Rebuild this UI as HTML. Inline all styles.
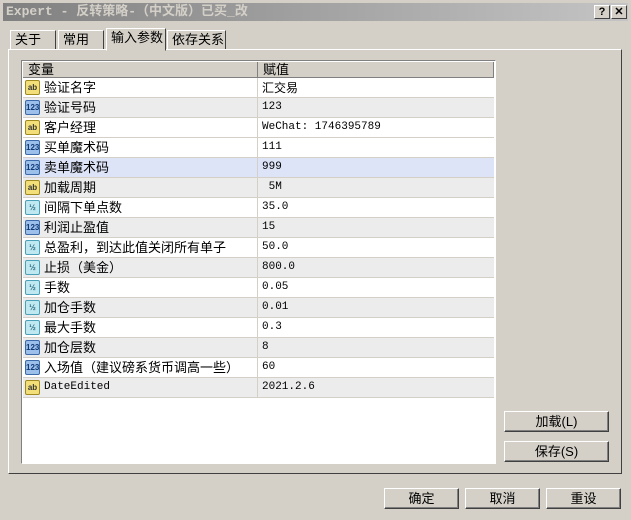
<!DOCTYPE html>
<html><head><meta charset="utf-8"><style>
*{margin:0;padding:0;box-sizing:border-box}
body{width:631px;height:520px;background:#d4d0c8;font-family:"Liberation Sans","Noto Sans CJK SC",sans-serif;font-size:12px;position:relative;overflow:hidden;color:#000}
.title{position:absolute;left:3px;top:3px;width:625px;height:18px;background:linear-gradient(90deg,#808080,#c4c4c4);color:#d4d0c8;font-weight:bold;font-family:"Liberation Mono","Noto Sans CJK SC",monospace;font-size:13px;line-height:18px;padding-left:3px}
.tb{position:absolute;top:5px;width:16px;height:14px;background:#d4d0c8;border:1px solid;border-color:#fff #404040 #404040 #fff;font-size:11px;font-weight:bold;text-align:center;line-height:12px}
.tab{position:absolute;height:20px;border:1px solid;border-color:#fff #404040 transparent #fff;line-height:18px;padding-left:4px;font-size:13px}
.panel{position:absolute;left:8px;top:49px;width:614px;height:425px;border:1px solid;border-color:#fff #404040 #404040 #fff}
.grid{position:absolute;left:21px;top:60px;width:475px;height:404px;background:#fff;border:1px solid;border-color:#808080 #fff #fff #808080}
.hdr{position:absolute;left:1px;top:1px;height:16px;width:471px;background:#d4d0c8;border-bottom:1px solid #808080;font-size:13px}
.hdr span{position:absolute;top:0;line-height:15px;border-right:1px solid #808080;height:16px;padding-left:5px}
.row{position:absolute;left:1px;width:471px;height:20px;border-bottom:1px solid #d4d0c8;line-height:19px}
.row .n{position:absolute;left:21px;font-size:13px}
.row .v{position:absolute;left:237px;font-family:"Liberation Mono","Noto Sans CJK SC",monospace;font-size:11px;padding-left:2px}
.row .sep{position:absolute;left:234px;top:0;height:20px;border-left:1px solid #d4d0c8}
.ic{position:absolute;left:2px;top:2px;width:15px;height:15px;border:1px solid;border-radius:2px;font-size:8px;font-weight:bold;line-height:13px;text-align:center;font-family:"Liberation Sans",sans-serif}
.ab{background:#f2df7a;border-color:#a08a20;color:#333}
.n123{background:#9cc0ea;border-color:#3a6aa8;color:#123c78}
.half{background:#bfe8f0;border-color:#4aa0b8;color:#2a6a80}
.btn{position:absolute;height:21px;background:#d4d0c8;border:1px solid;border-color:#fff #404040 #404040 #fff;box-shadow:inset -1px -1px 0 #808080;text-align:center;line-height:19px;font-size:13px}
</style></head><body>
<div class="title">Expert - 反转策略-（中文版）已买_改</div>
<div class="tb" style="left:594px">?</div>
<div class="tb" style="left:611px">✕</div>
<div class="tab" style="left:10px;top:30px;width:46px">关于</div>
<div class="tab" style="left:58px;top:30px;width:46px">常用</div>
<div class="tab" style="left:106px;top:28px;width:60px;height:23px;background:#d4d0c8;z-index:2">输入参数</div>
<div class="tab" style="left:167px;top:30px;width:59px">依存关系</div>
<div class="panel"></div>
<div class="grid">
<div class="hdr"><span style="left:0;width:235px">变量</span><span style="left:235px;width:236px">赋值</span></div>
<div class="row" style="top:17px"><div class="ic ab">ab</div><span class="n">验证名字</span><span class="sep"></span><span class="v" style="font-family:'Noto Sans CJK SC';font-size:12px">汇交易</span></div>
<div class="row" style="top:37px;background:#ececec"><div class="ic n123">123</div><span class="n">验证号码</span><span class="sep"></span><span class="v">123</span></div>
<div class="row" style="top:57px"><div class="ic ab">ab</div><span class="n">客户经理</span><span class="sep"></span><span class="v">WeChat: 1746395789</span></div>
<div class="row" style="top:77px"><div class="ic n123">123</div><span class="n">买单魔术码</span><span class="sep"></span><span class="v">111</span></div>
<div class="row" style="top:97px;background:#dde4f8"><div class="ic n123">123</div><span class="n">卖单魔术码</span><span class="sep"></span><span class="v">999</span></div>
<div class="row" style="top:117px;background:#ececec"><div class="ic ab">ab</div><span class="n">加载周期</span><span class="sep"></span><span class="v">&nbsp;5M</span></div>
<div class="row" style="top:137px"><div class="ic half">½</div><span class="n">间隔下单点数</span><span class="sep"></span><span class="v">35.0</span></div>
<div class="row" style="top:157px;background:#ececec"><div class="ic n123">123</div><span class="n">利润止盈值</span><span class="sep"></span><span class="v">15</span></div>
<div class="row" style="top:177px"><div class="ic half">½</div><span class="n">总盈利，到达此值关闭所有单子</span><span class="sep"></span><span class="v">50.0</span></div>
<div class="row" style="top:197px;background:#ececec"><div class="ic half">½</div><span class="n">止损（美金）</span><span class="sep"></span><span class="v">800.0</span></div>
<div class="row" style="top:217px"><div class="ic half">½</div><span class="n">手数</span><span class="sep"></span><span class="v">0.05</span></div>
<div class="row" style="top:237px;background:#ececec"><div class="ic half">½</div><span class="n">加仓手数</span><span class="sep"></span><span class="v">0.01</span></div>
<div class="row" style="top:257px"><div class="ic half">½</div><span class="n">最大手数</span><span class="sep"></span><span class="v">0.3</span></div>
<div class="row" style="top:277px;background:#ececec"><div class="ic n123">123</div><span class="n">加仓层数</span><span class="sep"></span><span class="v">8</span></div>
<div class="row" style="top:297px"><div class="ic n123">123</div><span class="n">入场值（建议磅系货币调高一些）</span><span class="sep"></span><span class="v">60</span></div>
<div class="row" style="top:317px;background:#ececec"><div class="ic ab">ab</div><span class="n" style="font-family:'Liberation Mono',monospace;font-size:11px">DateEdited</span><span class="sep"></span><span class="v">2021.2.6</span></div>
</div>
<div class="btn" style="left:504px;top:411px;width:105px">加载(L)</div>
<div class="btn" style="left:504px;top:441px;width:105px">保存(S)</div>
<div class="btn" style="left:384px;top:488px;width:75px">确定</div>
<div class="btn" style="left:465px;top:488px;width:75px">取消</div>
<div class="btn" style="left:546px;top:488px;width:75px">重设</div>
</body></html>
